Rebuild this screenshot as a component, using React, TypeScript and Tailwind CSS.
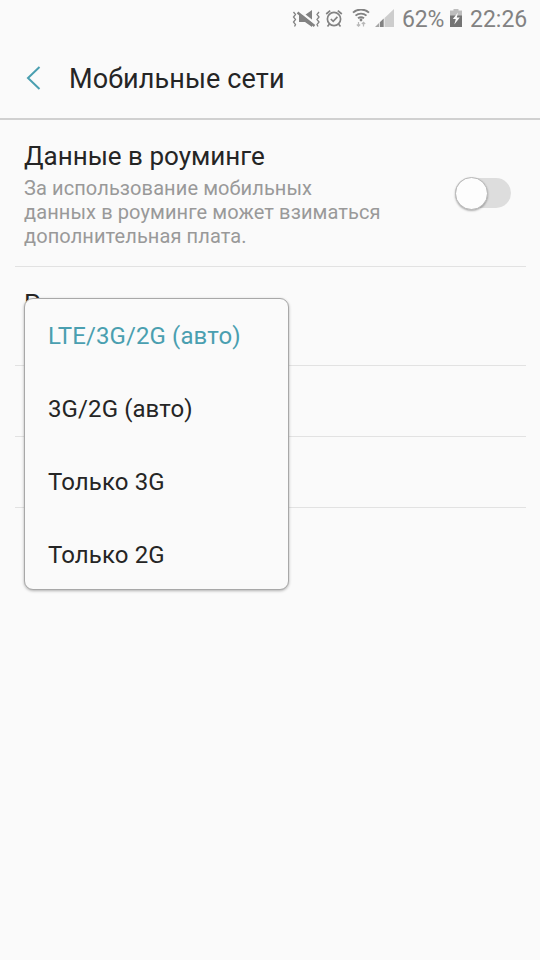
import { useState } from 'react';

type NetworkMode = {
  id: string;
  label: string;
};

const modes: NetworkMode[] = [
  { id: 'lte', label: 'LTE/3G/2G (авто)' },
  { id: '3g2g', label: '3G/2G (авто)' },
  { id: '3g', label: 'Только 3G' },
  { id: '2g', label: 'Только 2G' },
];

function StatusBar() {
  return (
    <div className="flex h-[38px] items-center pl-[292px] text-[#828282]">
      {/* vibrate / muted */}
      <svg width="29" height="20" viewBox="0 0 29 20" fill="none" className="shrink-0">
        <path d="M1.500 3l2 2.500-2 2.500 2 2.500-2 2.500 2 2.500-1 2M27 3l-2 2.500 2 2.500-2 2.500 2 2.500-2 2.500 1 2" stroke="currentColor" strokeWidth="1.300" />
        <path d="M7 6h6l7-5v17l-7-5H7z" fill="currentColor" />
        <path d="M6.500 1.500l17 13.500" stroke="#fafafa" strokeWidth="2.500" />
        <path d="M5.500 3.500l17 13.500" stroke="currentColor" strokeWidth="2.400" />
      </svg>
      {/* alarm */}
      <svg width="18" height="20" viewBox="0 0 18 20" fill="none" stroke="currentColor" className="ml-[4px] shrink-0">
        <circle cx="9" cy="10" r="6.600" strokeWidth="1.700" />
        <path d="M5.800 10l2.400 2.300 4.200-4.400M1.200 5l4-3.400M16.800 5l-4-3.400M4.500 15l-2 2.500M13.500 15l2 2.500" strokeWidth="1.700" />
      </svg>
      {/* wifi */}
      <svg width="18" height="20" viewBox="0 0 18 20" fill="none" stroke="currentColor" className="ml-[9px] shrink-0">
        <path d="M1 3.600a12 12 0 0 1 16 0M3.500 6.600a8.500 8.500 0 0 1 11 0M6 9.300a5 5 0 0 1 6 0" strokeWidth="1.900" />
        <circle cx="9" cy="11" r="1.400" fill="currentColor" stroke="none" />
        <path d="M6.500 13v4M4.800 15.500l1.700 1.700 1.700-1.700M11.500 17.500v-4M9.800 15l1.700-1.700 1.700 1.700" stroke="#b8b8b8" strokeWidth="1.200" />
      </svg>
      {/* signal */}
      <svg width="20" height="20" viewBox="0 0 20 20" className="ml-[5px] shrink-0">
        <path d="M9.500 9L19 0v18H9.500z" fill="#cdcdcd" />
        <path d="M0 18l4-4v4z" fill="#a5a5a5" />
        <path d="M4.800 13.200L8.700 9.600V18H4.800z" fill="currentColor" />
      </svg>
      <span className="ml-[7px] w-[43px] whitespace-nowrap text-[23px] leading-none tracking-[-0.200px]">62%</span>
      {/* battery */}
      <svg width="13" height="20" viewBox="0 0 13 20" className="ml-[5px] shrink-0">
        <path d="M3.500 0h5v1.500H12V7H0V1.500h3.500z" fill="#bdbdbd" />
        <path d="M0 6.500h12V18H0z" fill="#747474" />
        <path d="M8 3.500L2.800 10h3l-1.500 5.500L9.800 8.500H6.800z" fill="#fafafa" />
      </svg>
      <span className="ml-[7px] whitespace-nowrap text-[23px] leading-none">22:26</span>
    </div>
  );
}

function Header() {
  return (
    <header className="flex h-[82px] items-center border-b-2 border-[#d0d0d0] pl-[26px]">
      <svg width="15" height="26" viewBox="0 0 15 26" fill="none" className="shrink-0">
        <path d="M13.500 2L2 13l11.500 11" stroke="#4a9fb0" strokeWidth="2" />
      </svg>
      <h1 className="ml-[28px] pt-[2px] text-[27px] leading-none tracking-[0.120px] text-[#252525]">Мобильные сети</h1>
    </header>
  );
}

export default function App() {
  const [roaming, setRoaming] = useState(false);
  const [mode, setMode] = useState('lte');

  return (
    <div className="h-[960px] w-[540px] overflow-hidden bg-[#fafafa] font-[Roboto,sans-serif]">
      <StatusBar />
      <Header />

      <main className="pr-[14px] pl-[15px]">
        <section className="flex h-[147px] items-start justify-between border-b border-[#e2e2e2] pr-[15px] pl-[9px]">
          <div className="pt-[20px]">
            <h2 className="text-[26px] leading-[32px] text-[#252525]">Данные в роуминге</h2>
            <p className="mt-[4px] w-[370px] text-[20px] leading-[24px] tracking-[0.100px] text-[#999999]">
              За использование мобильных
              <br />
              данных в роуминге может взиматься
              <br />
              дополнительная плата.
            </p>
          </div>
          <button
            role="switch"
            aria-checked={roaming}
            aria-label="Данные в роуминге"
            onClick={() => setRoaming(!roaming)}
            className={`mt-[58px] flex h-[30px] w-[56px] items-center rounded-full ${roaming ? 'justify-end bg-[#8fc5d0]' : 'justify-start bg-[#dddddd]'}`}
          >
            <span className="size-[33px] shrink-0 rounded-full border border-[#b8b8b8] bg-[#fdfdfd] shadow-[0_1px_2px_rgba(0,0,0,0.3)]" />
          </button>
        </section>

        <section className="relative h-[99px] border-b border-[#e2e2e2] pt-[21px] pl-[9px]">
          <h2 className="text-[26px] leading-[32px] text-[#252525]">Режим сети</h2>

          {/* Network mode menu */}
          <ul className="absolute top-[31px] left-[9px] z-10 h-[292px] w-[265px] rounded-[9px] border border-[#a8a8a8] bg-[#fafafa] shadow-[0_1px_3px_rgba(0,0,0,0.3)]">
            {modes.map((item) => (
              <li key={item.id}>
                <button
                  onClick={() => setMode(item.id)}
                  className={`flex h-[73px] w-full items-center pl-[23px] text-[24px] tracking-[0.100px] ${mode === item.id ? 'text-[#4a9fb0]' : 'text-[#252525]'}`}
                >
                  {item.label}
                </button>
              </li>
            ))}
          </ul>
        </section>

        <div className="h-[71px] border-b border-[#e2e2e2]" />
        <div className="h-[71px] border-b border-[#e2e2e2]" />
      </main>
    </div>
  );
}
